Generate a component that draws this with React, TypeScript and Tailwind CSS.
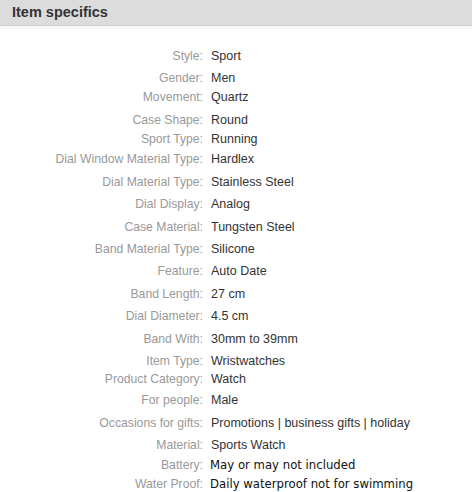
import React from 'react';

type Spec = { label: string; value: string; gap: string; alt?: boolean };

const specs: Spec[] = [
  { label: 'Style', value: 'Sport', gap: 'mt-0' },
  { label: 'Gender', value: 'Men', gap: 'mt-[6px]' },
  { label: 'Movement', value: 'Quartz', gap: 'mt-[3px]' },
  { label: 'Case Shape', value: 'Round', gap: 'mt-[7px]' },
  { label: 'Sport Type', value: 'Running', gap: 'mt-[3px]' },
  { label: 'Dial Window Material Type', value: 'Hardlex', gap: 'mt-[4px]' },
  { label: 'Dial Material Type', value: 'Stainless Steel', gap: 'mt-[7px]' },
  { label: 'Dial Display', value: 'Analog', gap: 'mt-[6px]' },
  { label: 'Case Material', value: 'Tungsten Steel', gap: 'mt-[7px]' },
  { label: 'Band Material Type', value: 'Silicone', gap: 'mt-[6px]' },
  { label: 'Feature', value: 'Auto Date', gap: 'mt-[6px]' },
  { label: 'Band Length', value: '27 cm', gap: 'mt-[7px]' },
  { label: 'Dial Diameter', value: '4.5 cm', gap: 'mt-[6px]' },
  { label: 'Band With', value: '30mm to 39mm', gap: 'mt-[7px]' },
  { label: 'Item Type', value: 'Wristwatches', gap: 'mt-[6px]' },
  { label: 'Product Category', value: 'Watch', gap: 'mt-[2px]' },
  { label: 'For people', value: 'Male', gap: 'mt-[5px]' },
  { label: 'Occasions for gifts', value: 'Promotions | business gifts | holiday', gap: 'mt-[7px]' },
  { label: 'Material', value: 'Sports Watch', gap: 'mt-[6px]' },
  { label: 'Battery', value: 'May or may not included', gap: 'mt-[4px]', alt: true },
  { label: 'Water Proof', value: 'Daily waterproof not for swimming', gap: 'mt-[3px]', alt: true },
];

export default function App() {
  return (
    <div className="w-[472px] h-[492px] bg-white overflow-hidden font-['Liberation_Sans',Arial,sans-serif]">
      {/* Header */}
      <div className="h-[26px] bg-[#dcdcdc] border-b border-[#cfcfcf] flex items-center px-3">
        <h2 className="text-[14.5px] font-bold text-[#333] leading-none">Item specifics</h2>
      </div>
      <div className="h-[3px] bg-[#f7f7f7]" />

      {/* Specs */}
      <div className="pt-[19px]">
        {specs.map((s) => (
          <div key={s.label} className={`flex h-4 items-center ${s.gap}`}>
            <div className="w-[203px] text-right text-[12.2px] text-[#999] leading-4 whitespace-nowrap">
              {s.label}:
            </div>
            <div
              className={
                s.alt
                  ? "ml-[7px] text-[11.7px] text-[#111] leading-4 whitespace-nowrap font-['DejaVu_Sans',Verdana,sans-serif]"
                  : 'ml-[8px] text-[12.5px] text-[#333] leading-4 whitespace-nowrap'
              }
            >
              {s.value}
            </div>
          </div>
        ))}
      </div>
    </div>
  );
}
